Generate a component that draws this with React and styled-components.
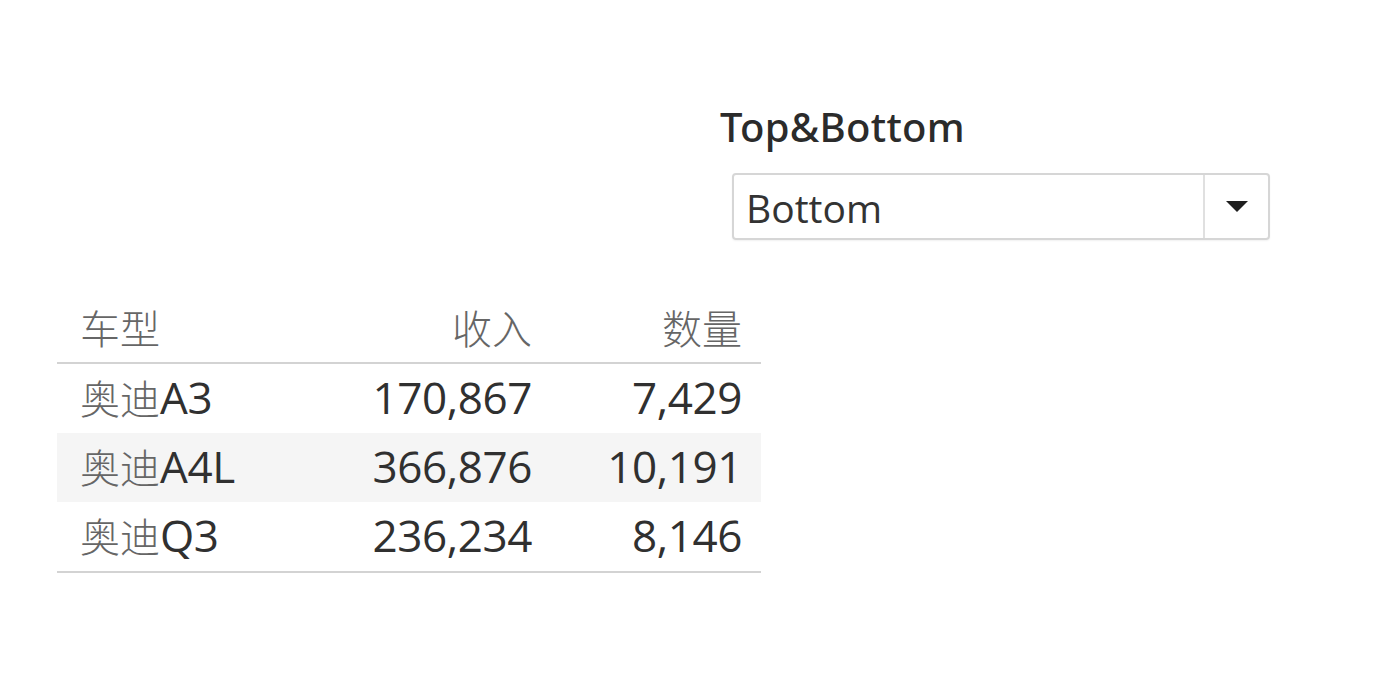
import React from "react";
import styled, { createGlobalStyle } from "styled-components";

const rows = [
    { model: "奥迪", suffix: "A3", revenue: "170,867", count: "7,429" },
    { model: "奥迪", suffix: "A4L", revenue: "366,876", count: "10,191", shaded: true },
    { model: "奥迪", suffix: "Q3", revenue: "236,234", count: "8,146" },
];

export default function App() {
    return (
        <>
            <GlobalStyle />
            <Page>
                <FilterPanel>
                    <FilterTitle>Top&amp;Bottom</FilterTitle>
                    <Select>
                        <SelectValue>Bottom</SelectValue>
                        <SelectButton>
                            <svg width="24" height="13" viewBox="0 0 24 13">
                                <path d="M1 1 L23 1 L12 12 Z" fill="#1f1f1f" />
                            </svg>
                        </SelectButton>
                    </Select>
                </FilterPanel>

                <Table>
                    <HeaderRow>
                        <Cell>车型</Cell>
                        <Cell $align="right">收入</Cell>
                        <Cell $align="right">数量</Cell>
                    </HeaderRow>
                    {rows.map((r) => (
                        <Row key={r.suffix} $shaded={r.shaded}>
                            <Cell>
                                <Han>{r.model}</Han>
                                {r.suffix}
                            </Cell>
                            <Cell $align="right">{r.revenue}</Cell>
                            <Cell $align="right">{r.count}</Cell>
                        </Row>
                    ))}
                </Table>
            </Page>
        </>
    );
}

const GlobalStyle = createGlobalStyle`
    html, body {
        margin: 0;
        padding: 0;
        background: #ffffff;
    }
    body {
        font-family: "Open Sans", "Noto Sans", "Noto Sans CJK SC", sans-serif;
        color: #333333;
    }
`;

const Page = styled.div`
    width: 1373px;
    height: 691px;
    display: flex;
    flex-direction: column;
    overflow: hidden;
`;

const FilterPanel = styled.div`
    margin: 106px 0 0 720px;
    display: flex;
    flex-direction: column;
`;

const FilterTitle = styled.div`
    font-family: "Noto Sans", "Open Sans", sans-serif;
    font-size: 40px;
    line-height: 41px;
    font-weight: 500;
    color: #2b2b2b;
    letter-spacing: 0.3px;
`;

const Select = styled.div`
    margin: 26px 0 0 12px;
    width: 538px;
    height: 67px;
    box-sizing: border-box;
    border: 2px solid #d6d6d6;
    border-radius: 4px;
    box-shadow: 0 1px 2px rgba(0, 0, 0, 0.06);
    display: flex;
    align-items: stretch;
`;

const SelectValue = styled.div`
    flex: 1;
    display: flex;
    align-items: center;
    padding: 2px 0 0 12px;
    font-size: 39px;
    color: #333333;
`;

const SelectButton = styled.div`
    width: 63px;
    border-left: 2px solid #e0e0e0;
    display: flex;
    align-items: center;
    justify-content: center;
`;

const Table = styled.div`
    margin: 56px 0 0 57px;
    width: 704px;
    border-bottom: 2px solid #d3d3d3;
`;

const RowBase = styled.div`
    display: grid;
    grid-template-columns: 250px 202px 210px;
    padding: 0 19px 0 23px;
    align-items: center;
`;

const HeaderRow = styled(RowBase)`
    height: 66px;
    border-bottom: 2px solid #d3d3d3;
    color: #666666;
    font-weight: 300;
    font-size: 40px;
`;

const Row = styled(RowBase)`
    height: 69px;
    font-size: 44px;
    color: #303030;
    letter-spacing: -0.4px;
    background: ${(p) => (p.$shaded ? "#f5f5f5" : "transparent")};
    padding-top: 0;
    padding-bottom: 4px;
    box-sizing: border-box;
`;

const Cell = styled.div`
    text-align: ${(p) => p.$align || "left"};
    white-space: nowrap;
    line-height: 1;
`;

const Han = styled.span`
    font-family: "Noto Sans CJK SC", sans-serif;
    font-weight: 300;
    font-size: 40px;
    letter-spacing: 0;
    color: #666666;
`;
